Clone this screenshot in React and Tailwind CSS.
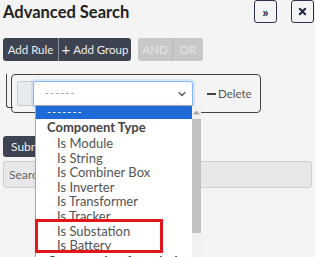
import { ChevronDown } from 'lucide-react';

const componentTypes = [
  'Is Module',
  'Is String',
  'Is Combiner Box',
  'Is Inverter',
  'Is Transformer',
  'Is Tracker',
  'Is Substation',
  'Is Battery',
];

const IconButton = ({ children }) => (
  <button className="flex h-[23px] w-[23px] items-center justify-center rounded-[3px] border border-[#2e3050] text-[#1f2140]">
    {children}
  </button>
);

const App = () => {
  return (
    <div className="relative h-[257px] w-[315px] overflow-hidden bg-[#f4f4f4] font-['Lato',sans-serif] text-[#555]">
      {/* header */}
      <div className="flex items-start justify-between pl-[3px] pr-[1px]">
        <h1 className="mt-[1px] whitespace-nowrap text-[16.5px] font-bold leading-[22px] text-[#222]">Advanced Search</h1>
        <div className="flex gap-[14px]">
          <IconButton>
            <span className="text-[14px] font-bold leading-none">»</span>
          </IconButton>
          <IconButton>
            <svg width="9" height="9" viewBox="0 0 10 10">
              <path d="M2 2 L8 8 M8 2 L2 8" stroke="currentColor" strokeWidth="2.2" strokeLinecap="round" />
            </svg>
          </IconButton>
        </div>
      </div>

      {/* rule / group buttons */}
      <div className="mt-[15px] flex pl-[3px]">
        <div className="flex overflow-hidden rounded-[3px] whitespace-nowrap text-[11.5px] text-[#eee]">
          <button className="h-[23px] w-[55px] bg-[#3d4350]">Add Rule</button>
          <button className="flex h-[23px] w-[73px] items-center justify-center gap-[3px] border-l border-[#8a8f99] bg-[#3d4350]">
            <span className="text-[15px] leading-none">+</span>Add Group
          </button>
        </div>
        <div className="ml-[7px] flex overflow-hidden rounded-[3px] text-[11.5px] text-[#e4e4e4]">
          <button className="h-[23px] w-[34px] bg-[#c8c8c8]">AND</button>
          <button className="h-[23px] w-[31px] border-l border-[#b8b8b8] bg-[#c8c8c8]">OR</button>
        </div>
      </div>

      {/* rule */}
      <div className="relative h-[52px]">
        <div className="absolute left-[6px] top-0 h-[34px] w-[7px] rounded-bl-[3px] border-b-[1.5px] border-l-[1.5px] border-[#444]" />
        <div className="ml-[11px] mt-[13px] flex h-[39px] w-[250px] items-center rounded-[4px] border-[1.5px] border-[#444] px-[5px]">
          <div className="h-[25px] w-[16px] rounded-l-[3px] border border-r-0 border-[#c6cbd1] bg-[#e9ecef]" />
          <div className="flex h-[26px] w-[160px] items-center justify-between rounded-[3px] border border-[#86b7fe] bg-white pl-[11px] pr-[4px] shadow-[0_0_0_2px_rgba(13,110,253,0.12)]">
            <span className="text-[11px] tracking-[1px] text-[#999]">------</span>
            <ChevronDown size={12} strokeWidth={2.5} className="text-[#555]" />
          </div>
          <div className="ml-[14px] flex items-center text-[11.5px] text-[#555]">
            <span className="h-[2px] w-[9px] bg-[#444]" />
            <span className="ml-[2px]">Delete</span>
          </div>
        </div>
      </div>

      {/* submit + search */}
      <button className="ml-[3px] mt-[10px] h-[21px] rounded-[3px] bg-[#3d4350] px-[8px] text-[12px] text-[#eee]">Submit</button>
      <div className="mx-[3px] mt-[4px] flex h-[27px] items-center rounded-[3px] border border-[#cfcfd3] bg-[#e8e8ea] px-[5px] text-[12px] text-[#666]">
        Search...
      </div>

      {/* open select list */}
      <div className="absolute left-[35px] top-[105px] flex h-[170px] w-[158px] border border-[#a9a9a9] bg-white shadow-[3px_3px_6px_rgba(0,0,0,0.18)]">
        <div className="flex-1 whitespace-nowrap text-[13px] leading-[14.6px] text-[#555]">
          <div className="flex h-[13px] items-center bg-[#1e6ad6] pl-[11px] text-[11px] tracking-[1px] text-white">-------</div>
          <div className="flex h-[17px] items-center pl-[11px] text-[13px] font-bold text-[#444]">Component Type</div>
          {componentTypes.map((t) => (
            <div key={t} className="h-[14.6px] pl-[21px]">
              {t}
            </div>
          ))}
          <div className="flex h-[17px] items-center pl-[11px] text-[13px] font-bold text-[#444]">Construction Association</div>
        </div>
        <div className="flex w-[11px] flex-col items-center bg-[#f1f1f1]">
          <svg width="7" height="5" viewBox="0 0 7 5" className="mt-[4px]">
            <path d="M0 4.5 L3.5 0.5 L7 4.5 Z" fill="#a3a3a3" />
          </svg>
          <div className="mt-[4px] h-[114px] w-[9px] bg-[#c1c1c1]" />
        </div>
      </div>

      {/* highlight annotation */}
      <div className="absolute left-[35px] top-[219px] h-[34px] w-[128px] border-[3px] border-[#e3161e]" />
    </div>
  );
};

export default App;
